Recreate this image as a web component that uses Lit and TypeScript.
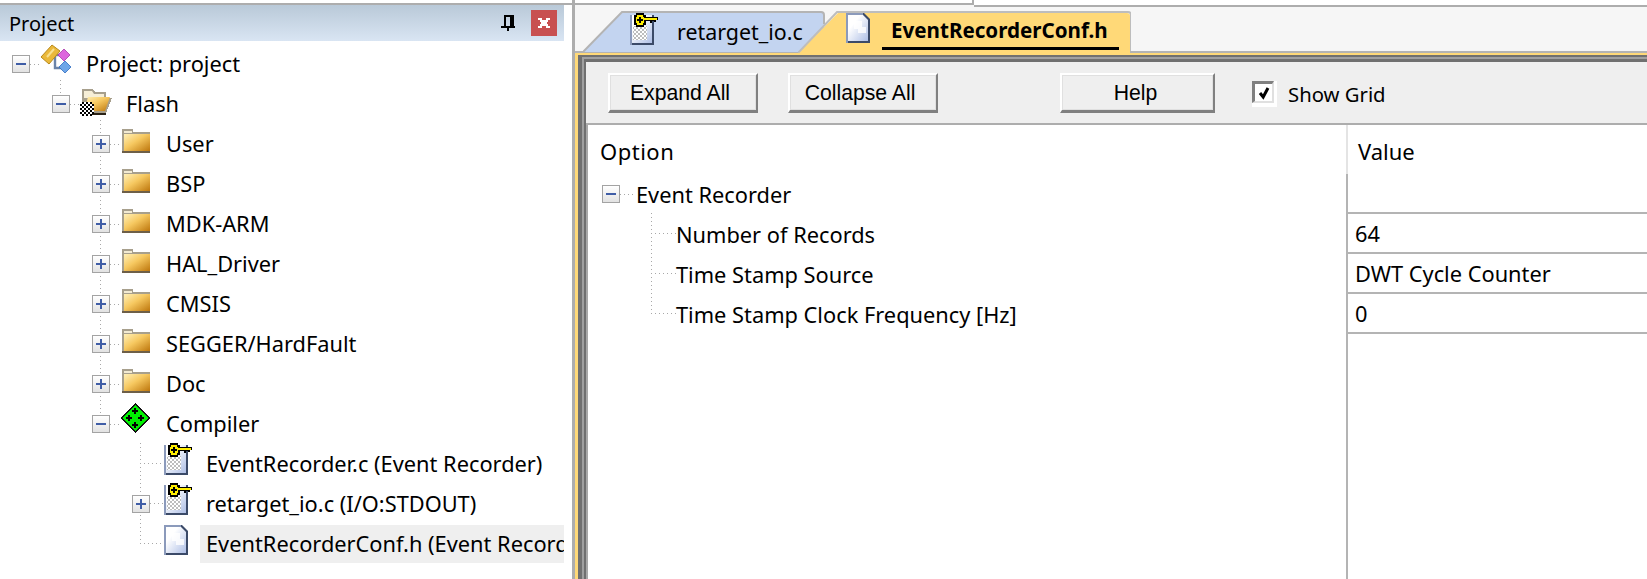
import { LitElement, html, css, svg } from "lit";
import { customElement } from "lit/decorators.js";

const defs = svg`<defs>
  <linearGradient id="doc" x1="0" y1="0" x2="1" y2="1"><stop offset="0.3" stop-color="#ffffff"/><stop offset="1" stop-color="#aebfe6"/></linearGradient>
  <linearGradient id="fold" x1="0" y1="0" x2="1" y2="1"><stop offset="0" stop-color="#fff0b8"/><stop offset="0.45" stop-color="#f6c860"/><stop offset="1" stop-color="#bd760c"/></linearGradient>
  <pattern id="chk" width="4" height="4" patternUnits="userSpaceOnUse"><rect width="4" height="4" fill="#fff"/><rect width="2" height="2" fill="#bdbdbd"/><rect x="2" y="2" width="2" height="2" fill="#bdbdbd"/></pattern>
  <pattern id="bw" width="4" height="4" patternUnits="userSpaceOnUse"><rect width="4" height="4" fill="#fff"/><rect width="2" height="2" fill="#000"/><rect x="2" y="2" width="2" height="2" fill="#000"/></pattern>
</defs>`;

const keyGlyph = svg`<g shape-rendering="crispEdges">
  <path d="M6 0h8v2h2v2h12v3h-2v2h-2V8h-2v2h-2V8h-4v4h-2v2H6v-2H4V2h2z" fill="#000"/>
  <path d="M7 2h6v2h1v6h-1v2H7v-2H6V4h1z" fill="#ffee00"/>
  <rect x="14" y="5" width="13" height="2" fill="#ffee00"/>
  <path d="M9 4h2v2h2v2h-2v2H9V8H7V6h2z" fill="#000"/>
</g>`;

const keyDoc = svg`<svg class="ic file key" width="28" height="32" viewBox="0 0 28 32">${defs}
  <rect x="0" y="2" width="24" height="30" fill="#3b4a68"/>
  <rect x="0" y="2" width="22" height="28" fill="url(#doc)"/>
  <rect x="0" y="2" width="2" height="30" fill="#8b9abb"/>
  <rect x="3" y="13" width="14" height="14" fill="url(#chk)"/>
  ${keyGlyph}
</svg>`;

const plainDoc = svg`<svg class="ic file plain" width="28" height="32" viewBox="0 0 28 32">${defs}
  <path d="M0 2h18l6 6v24H0z" fill="#3b4a68"/>
  <path d="M2 4h15l5 5v21H2z" fill="url(#doc)"/>
  <path d="M0 2h17v2H2v28H0z" fill="#8b9abb"/>
  <path d="M8 10h8v6h4v6h-8v-4H8z" fill="#fff" opacity=".8"/>
</svg>`;

const folder = svg`<svg class="ic folder" width="28" height="24" viewBox="0 0 28 24" shape-rendering="crispEdges">${defs}
  <path d="M0 0h11v3h17v21H0z" fill="#a79f8c"/>
  <rect x="2" y="2" width="8" height="2" fill="#f2ead2"/>
  <rect x="2" y="5" width="26" height="17" fill="url(#fold)"/>
  <rect x="0" y="22" width="28" height="2" fill="#6d5f48"/>
</svg>`;

const openFolder = svg`<svg class="ic open" width="32" height="28" viewBox="0 0 32 28">${defs}
  <path d="M2 0h11l2 3h11v6h6l-6 15H2z" fill="#a79f8c" shape-rendering="crispEdges"/>
  <path d="M4 2h8l2 3h10v4H4z" fill="#f6eed6"/>
  <path d="M8 8h22l-5 14H4z" fill="url(#fold)"/>
  <path d="M2 24h24v2H2z" fill="#2a2216"/>
  <path d="M2 14h2v-2h10v2h2v10h-2v2H4v-2H2z" transform="translate(-2 1)" fill="url(#bw)" shape-rendering="crispEdges"/>
</svg>`;

const rootIcon = svg`<svg class="ic root" width="32" height="28" viewBox="0 0 32 28">
  <path d="M14 10h10M15 10v13h12" fill="none" stroke="#6b84a8" stroke-width="2.4"/>
  <path d="M12 0l8 6L9 19 1 12z" fill="#eab83a" stroke="#b8891a" stroke-width="1"/>
  <path d="M7 12L14 4" stroke="#f8e090" stroke-width="2"/>
  <path d="M24 4l6 6-6 6-6-6z" fill="#dd66dd" stroke="#a838a8" stroke-width=".8"/>
  <path d="M25 16l6 6-6 6-6-6z" fill="#6ea6e8" stroke="#2f6cc0" stroke-width=".8"/>
</svg>`;

const plus = (x: number, y: number) => svg`<rect x="${x - 1}" y="${y - 3}" width="2" height="6" fill="#000"/><rect x="${x - 3}" y="${y - 1}" width="6" height="2" fill="#000"/>`;
const diamond = svg`<svg class="ic comp" width="30" height="30" viewBox="0 0 30 30" shape-rendering="crispEdges">
  <path d="M15 0L30 15 15 30 0 15z" fill="#111"/>
  <path d="M15 2L28 15 15 28 2 15z" fill="#00f000"/>
  ${plus(15, 8)}${plus(9, 15)}${plus(21, 15)}${plus(15, 22)}
</svg>`;

const expander = (open: boolean) => html`<span class="exp"><svg width="10" height="10" viewBox="0 0 10 10" shape-rendering="crispEdges">
  <rect x="0" y="4" width="10" height="2" fill="#3f5da6"/>${open ? "" : svg`<rect x="4" y="0" width="2" height="10" fill="#3f5da6"/>`}</svg></span>`;

type Row = { d: number; label: string; icon: unknown; exp?: "open" | "closed"; sel?: boolean };
const tree: Row[] = [
  { d: 0, label: "Project: project", icon: rootIcon, exp: "open" },
  { d: 1, label: "Flash", icon: openFolder, exp: "open" },
  ...["User", "BSP", "MDK-ARM", "HAL_Driver", "CMSIS", "SEGGER/HardFault", "Doc"].map((label) => ({ d: 2, label, icon: folder, exp: "closed" as const })),
  { d: 2, label: "Compiler", icon: diamond, exp: "open" },
  { d: 3, label: "EventRecorder.c (Event Recorder)", icon: keyDoc },
  { d: 3, label: "retarget_io.c (I/O:STDOUT)", icon: keyDoc, exp: "closed" },
  { d: 3, label: "EventRecorderConf.h (Event Recorder)", icon: plainDoc, sel: true },
];

const opts = [
  ["Number of Records", "64"],
  ["Time Stamp Source", "DWT Cycle Counter"],
  ["Time Stamp Clock Frequency [Hz]", "0"],
];

@customElement("app-root")
export class AppRoot extends LitElement {
  static styles = css`
    :host { display: flex; width: 1647px; height: 579px; overflow: hidden; background: #fff; color: #000;
      font-family: "Noto Sans", sans-serif; font-size: 21.8px; }
    * { box-sizing: border-box; }
    .left { width: 572px; flex: none; padding-top: 3px; display: flex; flex-direction: column; }
    .topline { height: 2px; background: #adadad; }
    .head { width: 564px; height: 36px; flex: none; display: flex; align-items: center; padding-left: 9px;
      background: linear-gradient(#b9c9d8, #d9e5f3); font-size: 20px; }
    .head .t { flex: 1; }
    .pin { margin-right: 16px; display: block; }
    .close { width: 26px; height: 26px; margin-right: 7px; background: #c85050; display: flex; align-items: center; justify-content: center; }
    .tree { position: relative; width: 564px; margin-top: 3px; flex: 1; overflow: hidden; }
    .guides { position: absolute; left: 0; top: 0; }
    .row { position: relative; height: 40px; display: flex; align-items: center; white-space: nowrap; }
    .exp { width: 18px; height: 18px; flex: none; border: 1.5px solid #a3a3a3; background: linear-gradient(#fff, #e2e2e2);
      display: flex; align-items: center; justify-content: center; }
    .noexp { width: 18px; flex: none; }
    .slot { width: 50px; height: 40px; flex: none; display: flex; align-items: flex-start; }
    .label { padding: 0 7px 0 6px; line-height: 38px; height: 38px; }
    .label.sel { background: #efefef; flex: 1; overflow: hidden; }
    .ic { display: block; overflow: visible; flex: none; }
    .slot .ic.root { margin: 1px 0 0 10px; }
    .slot .ic.open { margin: 5px 0 0 10px; }
    .slot .ic.folder { margin: 5px 0 0 12px; }
    .slot .ic.comp { margin: -1px 0 0 10px; }
    .slot .ic.file { margin: -1px 0 0 14px; }

    .right { flex: 1; min-width: 0; display: flex; flex-direction: column; border-left: 3px solid #adadad; }
    .strip-top { height: 7px; display: flex; flex: none; background: #f6f6f6; }
    .st-a { width: 397px; height: 5px; background: linear-gradient(#fff 3px, #adadad 3px); }
    .st-n { width: 2px; height: 5px; background: #adadad; }
    .st-b { flex: 1; background: linear-gradient(#fff 5px, #adadad 5px); }
    .tabs { height: 46px; flex: none; background: #f6f6f6; border-bottom: 2px solid #b4b4b4; padding-left: 8px; display: flex; align-items: flex-start; padding-top: 3px; }
    .tab { position: relative; height: 42px; flex: none; display: flex; align-items: center; }
    .tab svg.bg { position: absolute; left: 0; top: 0; }
    .tab > :not(.bg) { position: relative; }
    .tab .ic { align-self: flex-start; }
    .t1 { width: 242px; padding-left: 47px; }
    .t1 .ic { margin-top: 3px; }
    .t1 .name { margin-left: 19px; font-size: 21.4px; white-space: nowrap; }
    .t2 { width: 333px; height: 43px; margin-left: -27px; padding-left: 48px; }
    .t2 .ic { margin-top: 1px; }
    .t2 .name { margin-left: 8px; height: 37px; line-height: 34px; padding: 0 11px 0 9px; border-bottom: 3px solid #000;
      font-weight: 700; font-size: 20.6px; align-self: flex-start; margin-top: 3px; white-space: nowrap; }
    .f1 { flex: 1; min-height: 0; display: flex; flex-direction: column; border-left: 3px solid #ffd978; border-top: 2px solid #ffd978; }
    .f2 { flex: 1; min-height: 0; display: flex; flex-direction: column; border-left: 4px solid #707070; border-top: 2px solid #707070; }
    .f3 { flex: 1; min-height: 0; display: flex; flex-direction: column; border-left: 2px solid #a0a0a0; border-top: 2px solid #a0a0a0; }
    .f4 { flex: 1; min-height: 0; display: flex; flex-direction: column; border-left: 2px solid #707070; border-top: 3px solid #707070; }
    .bar { height: 63px; flex: none; background: #efefef; border-bottom: 2px solid #adadad; padding: 11px 0 0 22px; display: flex; align-items: flex-start;
      font-family: "Liberation Sans", Arial, sans-serif; font-size: 21.2px; }
    .btn { width: 150px; height: 40px; display: flex; align-items: center; justify-content: center; background: #efefef; padding-right: 6px;
      border: 2px solid; border-color: #fff #808080 #808080 #fff; box-shadow: inset -1px -1px 0 #e0e0e0, inset 1px 1px 0 #e0e0e0; border-bottom-width: 3px; }
    .btn.m { margin-left: 30px; }
    .btn.h { width: 155px; margin-left: 122px; padding-right: 4px; }
    .chk { margin-left: 37px; margin-top: 8px; width: 25px; height: 26px; background: #fff; flex: none; border: solid; border-width: 0 3px 4px 0; border-color: #fff; display: flex; }
    .chkin { flex: 1; border: solid; border-width: 3px 2px 2px 3px; border-color: #808080 #e0e0e0 #e0e0e0 #808080; background: #fff; display: flex; align-items: center; justify-content: center; }
    .chklbl { margin-left: 11px; margin-top: 7px; font-family: "Noto Sans", sans-serif; font-size: 20.3px; }

    .table { position: relative; flex: 1; min-height: 0; display: flex; flex-direction: column; background: #fff; border-left: 2px solid #a8a8a8; }
    .tg { position: absolute; left: 0; top: 0; }
    .tr { position: relative; display: grid; grid-template-columns: 758px 1fr; height: 40px; flex: none; align-items: stretch; }
    .tr.hdr { height: 49px; }
    .tr.fill { flex: 1; }
    .c1 { display: flex; align-items: center; white-space: nowrap; }
    .c2 { display: flex; align-items: center; padding-left: 7px; border-left: 2px solid #b4b4b4; border-bottom: 2px solid #b4b4b4; white-space: nowrap; }
    .hdr .c1 { padding: 3px 0 0 12px; font-size: 22px; letter-spacing: .5px; }
    .hdr .c2 { padding: 3px 0 0 10px; border-bottom: 0; border-left-color: #e4e4e4; font-size: 22px; }
    .fill .c2 { border-bottom: 0; }
    .group .c1 { padding-left: 14px; }
    .group .exp { margin-right: 16px; }
    .leaf .c1 { padding-left: 88px; }
  `;

  render() {
    return html`
      <div class="left">
        <div class="topline"></div>
        <div class="head">
          <span class="t">Project</span>
          <svg class="pin" width="14" height="16" viewBox="0 0 14 16" shape-rendering="crispEdges">
            <path d="M3 0h10v11h1v2H8v3H6v-3H0v-2h3zM5 2v9h4V2z" fill="#000" fill-rule="evenodd"/>
          </svg>
          <span class="close"><svg width="12" height="10" viewBox="0 0 12 10" shape-rendering="crispEdges">
            <path d="M0 0h4v2h4V0h4v2h-2v2H9v2h1v2h2v2H8V8H4v2H0V8h2V6h1V4H2V2H0z" fill="#fff"/></svg></span>
        </div>
        <div class="tree">
          <svg class="guides" width="564" height="535" viewBox="0 44 564 535" fill="none" stroke="#a8a8a8" stroke-dasharray="1 3" shape-rendering="crispEdges">
            <path d="M30 64.5H40M60.5 80V95M70 104.5H80M100.5 120V415M110 144.5H122M110 184.5H122M110 224.5H122M110 264.5H122M110 304.5H122M110 344.5H122M110 384.5H122M110 424.5H120M140.5 443V544M140 463.5H164M150 503.5H164M140 543.5H164"/>
          </svg>
          ${tree.map((r) => html`
            <div class="row" style="padding-left:${12 + 40 * r.d}px">
              ${r.exp ? expander(r.exp === "open") : html`<span class="noexp"></span>`}
              <span class="slot">${r.icon}</span>
              <span class="label ${r.sel ? "sel" : ""}">${r.label}</span>
            </div>`)}
        </div>
      </div>
      <div class="right">
        <div class="strip-top"><span class="st-a"></span><span class="st-n"></span><span class="st-b"></span></div>
        <div class="tabs">
          <div class="tab t1">
            <svg class="bg" width="242" height="42" viewBox="0 0 242 42">
              <path d="M0 42L40 2H238Q241 2 241 5V42Z" fill="#c3d4f0"/>
              <path d="M0 42L39 2H238Q241 2 241 5V14" fill="none" stroke="#b4b4b4" stroke-width="2"/>
            </svg>
            ${keyDoc}
            <span class="name">retarget_io.c</span>
          </div>
          <div class="tab t2">
            <svg class="bg" width="333" height="43" viewBox="0 0 333 43">
              <path d="M0 43L40 3H329Q332 3 332 6V43Z" fill="#ffd978"/>
              <path d="M0 43L39 2H330Q333 2 333 5V41" fill="none" stroke="#bdbdbd" stroke-width="2"/>
            </svg>
            ${plainDoc}
            <span class="name">EventRecorderConf.h</span>
          </div>
        </div>
        <div class="f1"><div class="f2"><div class="f3"><div class="f4">
          <div class="bar">
            <div class="btn">Expand All</div>
            <div class="btn m">Collapse All</div>
            <div class="btn h">Help</div>
            <div class="chk"><div class="chkin">
              <svg width="12" height="14" viewBox="0 0 12 14"><path d="M2 7l3.2 4L10 2" fill="none" stroke="#000" stroke-width="3"/></svg>
            </div></div>
            <div class="chklbl">Show Grid</div>
          </div>
          <div class="table">
            <svg class="tg" width="200" height="200" viewBox="588 125 200 200" fill="none" stroke="#a8a8a8" stroke-dasharray="1 3" shape-rendering="crispEdges">
              <path d="M620 194.5H636M651.5 213V313M651 233.5H676M651 273.5H676M651 313.5H676"/>
            </svg>
            <div class="tr hdr"><div class="c1">Option</div><div class="c2">Value</div></div>
            <div class="tr group"><div class="c1">${expander(true)}<span>Event Recorder</span></div><div class="c2"></div></div>
            ${opts.map(([a, b]) => html`<div class="tr leaf"><div class="c1">${a}</div><div class="c2">${b}</div></div>`)}
            <div class="tr fill"><div class="c1"></div><div class="c2"></div></div>
          </div>
        </div></div></div></div>
      </div>
    `;
  }
}
